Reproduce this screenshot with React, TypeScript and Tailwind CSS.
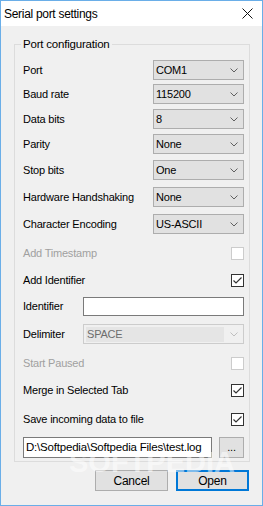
import React from 'react';

const Chevron = ({ color = '#606060' }: { color?: string }) => (
  <svg width="8" height="5" viewBox="0 0 8 5" className="shrink-0">
    <path d="M0.5 0.5 L4 4 L7.5 0.5" fill="none" stroke={color} strokeWidth="1" />
  </svg>
);

function Combo({ value }: { value: string }) {
  return (
    <div className="w-[91px] h-[20px] border border-[#adadad] bg-[#e1e1e1] flex items-center justify-between pl-[2px] pr-[5px]">
      <span>{value}</span>
      <Chevron />
    </div>
  );
}

function Check({ checked, disabled }: { checked?: boolean; disabled?: boolean }) {
  return (
    <div
      className={`ml-auto w-[13px] h-[13px] bg-white border flex items-center justify-center ${
        disabled ? 'border-[#cccccc]' : 'border-[#333333]'
      }`}
    >
      {checked && (
        <svg width="11" height="11" viewBox="0 0 11 11">
          <path d="M1.5 5.5 L4 8 L9.5 2.5" fill="none" stroke="#333333" strokeWidth="1.2" />
        </svg>
      )}
    </div>
  );
}

const comboRows = [
  { label: 'Port', value: 'COM1', mt: 'mt-[8px]' },
  { label: 'Baud rate', value: '115200', mt: 'mt-[4px]' },
  { label: 'Data bits', value: '8', mt: 'mt-[5px]' },
  { label: 'Parity', value: 'None', mt: 'mt-[5px]' },
  { label: 'Stop bits', value: 'One', mt: 'mt-[6px]' },
  { label: 'Hardware Handshaking', value: 'None', mt: 'mt-[7px]' },
  { label: 'Character Encoding', value: 'US-ASCII', mt: 'mt-[7px]' },
];

export default function App() {
  return (
    <div className="relative w-[263px] h-[506px] border border-[#6aaee8] bg-[#f0f0f0] flex flex-col text-[11px] tracking-[-0.2px] text-black font-['Liberation_Sans',Arial,sans-serif] overflow-hidden">
      {/* Title bar */}
      <div className="h-[25px] bg-white flex items-center justify-between pl-[3px] pr-[9px] shrink-0">
        <span className="text-[12px] tracking-[-0.3px]">Serial port settings</span>
        <svg width="11" height="11" viewBox="0 0 11 11">
          <path d="M0.5 0.5 L10.5 10.5 M10.5 0.5 L0.5 10.5" stroke="#111" strokeWidth="1" />
        </svg>
      </div>

      {/* Group box */}
      <fieldset className="mt-[11px] ml-[13px] w-[236px] border border-[#dcdcdc] pl-[8px] pr-[5px] pb-[3px]">
        <legend className="ml-[-2px] px-[2px] leading-[15px] text-[11.5px]">Port configuration</legend>

        {comboRows.map((r) => (
          <div key={r.label} className={`${r.mt} h-[20px] flex items-center`}>
            <span className="w-[130px] whitespace-nowrap">{r.label}</span>
            <Combo value={r.value} />
          </div>
        ))}

        <div className="mt-[9px] h-[20px] flex items-center">
          <span className="text-[#a0a0a0]">Add Timestamp</span>
          <Check disabled />
        </div>
        <div className="mt-[7px] h-[20px] flex items-center">
          <span>Add Identifier</span>
          <Check checked />
        </div>
        <div className="mt-[6px] h-[20px] flex items-center">
          <span className="w-[60px]">Identifier</span>
          <div className="w-[161px] h-[19px] bg-white border border-[#7a7a7a]" />
        </div>
        <div className="mt-[8px] h-[20px] flex items-center">
          <span className="w-[60px]">Delimiter</span>
          <div className="w-[161px] h-[20px] border border-[#cccccc] bg-[#f0f0f0] flex items-center pl-[2px] pr-[5px]">
            <div className="w-[138px] h-[15px] bg-[#e5e5e5] flex items-center pl-[1px] text-[#6d6d6d]">SPACE</div>
            <span className="ml-auto">
              <Chevron color="#bfbfbf" />
            </span>
          </div>
        </div>
        <div className="mt-[9px] h-[20px] flex items-center">
          <span className="text-[#a0a0a0]">Start Paused</span>
          <Check disabled />
        </div>
        <div className="mt-[7px] h-[20px] flex items-center">
          <span>Merge in Selected Tab</span>
          <Check checked />
        </div>
        <div className="mt-[9px] h-[20px] flex items-center">
          <span>Save incoming data to file</span>
          <Check checked />
        </div>
        <div className="mt-[8px] h-[21px] flex items-center gap-[7px]">
          <div className="w-[189px] h-[21px] bg-white border border-[#7a7a7a] flex items-center pl-[2px] whitespace-nowrap overflow-hidden text-[11.5px]">
            D:\Softpedia\Softpedia Files\test.log
          </div>
          <div className="w-[25px] h-[21px] bg-[#e1e1e1] border border-[#adadad] flex items-end justify-center pb-[4px] leading-none">
            ...
          </div>
        </div>
      </fieldset>

      {/* Buttons */}
      <div className="mt-[8px] flex justify-end gap-[8px] pr-[13px] text-[12px]">
        <div className="w-[73px] h-[21px] bg-[#e1e1e1] border border-[#adadad] flex items-center justify-center">
          Cancel
        </div>
        <div className="w-[73px] h-[21px] bg-[#e1e1e1] border-2 border-[#0078d7] flex items-center justify-center">
          Open
        </div>
      </div>

      {/* Watermark */}
      <div className="pointer-events-none absolute left-[68px] top-[440px] text-[29px] font-bold text-white/50 tracking-[0px]">
        SOFTPEDIA
      </div>
    </div>
  );
}
